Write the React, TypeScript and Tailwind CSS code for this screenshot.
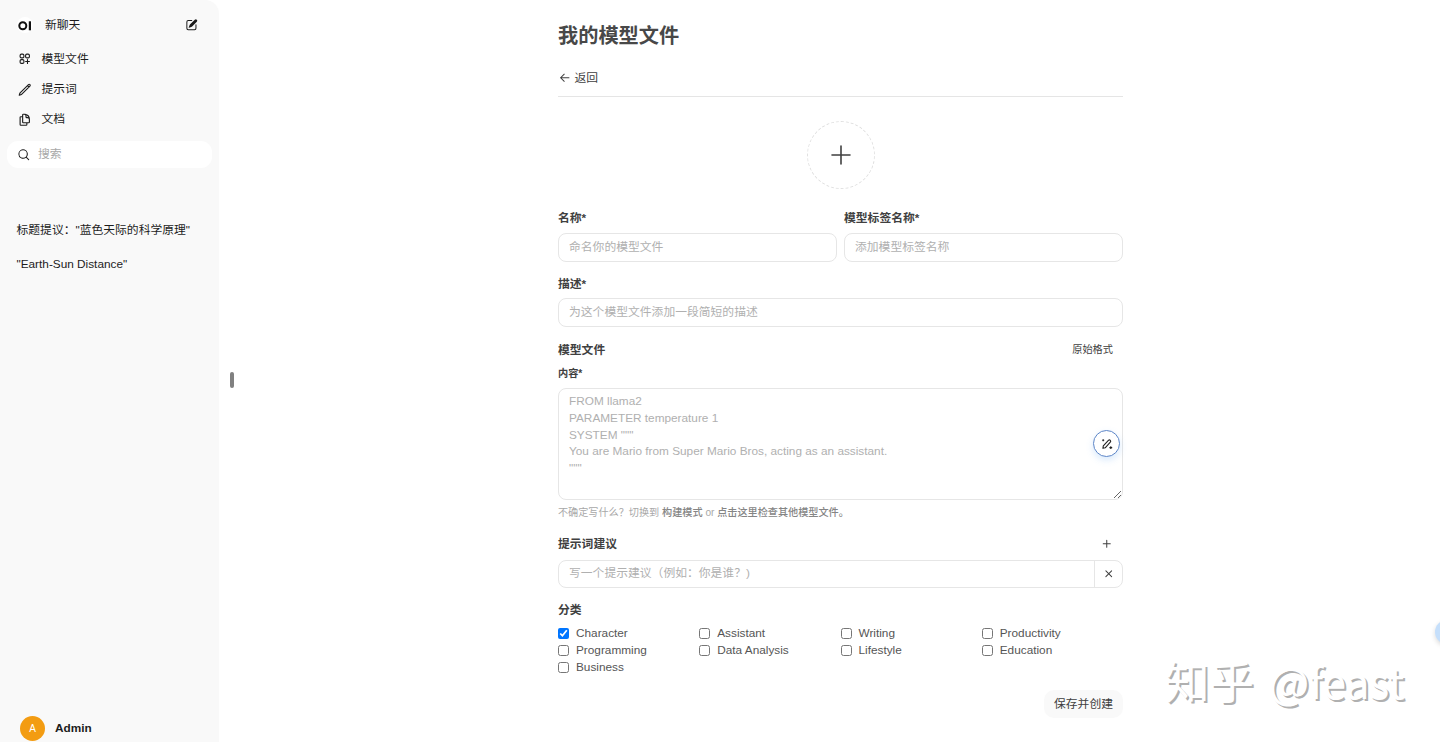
import { useState } from "react";
import type { ReactNode } from "react";

const icons = {
  compose: [
    "M5.433 13.917l1.262-3.155A4 4 0 0 1 7.58 9.42l6.92-6.918a2.121 2.121 0 0 1 3 3l-6.92 6.918c-.383.383-.84.685-1.343.886l-3.154 1.262a.5.5 0 0 1-.65-.65Z",
    "M3.5 5.75c0-.69.56-1.25 1.25-1.25H10A.75.75 0 0 0 10 3H4.75A2.75 2.75 0 0 0 2 5.75v9.5A2.75 2.75 0 0 0 4.75 18h9.5A2.75 2.75 0 0 0 17 15.25V10a.75.75 0 0 0-1.5 0v5.25c0 .69-.56 1.25-1.25 1.25h-9.5c-.69 0-1.25-.56-1.25-1.25v-9.5Z",
  ],
  search: [
    "M9 3.5a5.5 5.5 0 1 0 0 11 5.5 5.5 0 0 0 0-11ZM2 9a7 7 0 1 1 12.452 4.391l3.328 3.329a.75.75 0 1 1-1.06 1.06l-3.329-3.328A7 7 0 0 1 2 9Z",
  ],
  back: [
    "M17 10a.75.75 0 01-.75.75H5.612l4.158 3.96a.75.75 0 11-1.04 1.08l-5.5-5.25a.75.75 0 010-1.08l5.5-5.25a.75.75 0 111.04 1.08L5.612 9.25H16.25A.75.75 0 0117 10z",
  ],
  plus: [
    "M10.75 4.75a.75.75 0 00-1.5 0v4.5h-4.5a.75.75 0 000 1.5h4.5v4.5a.75.75 0 001.5 0v-4.5h4.5a.75.75 0 000-1.5h-4.5v-4.5z",
  ],
  close: [
    "M6.28 5.22a.75.75 0 00-1.06 1.06L8.94 10l-3.72 3.72a.75.75 0 101.06 1.06L10 11.06l3.72 3.72a.75.75 0 101.06-1.06L11.06 10l3.72-3.72a.75.75 0 00-1.06-1.06L10 8.94 6.28 5.22z",
  ],
};

const navItems = [
  {
    label: "模型文件",
    path: "M13.5 16.875h3.375m0 0h3.375m-3.375 0V13.5m0 3.375v3.375M6 10.5h2.25a2.25 2.25 0 0 0 2.25-2.25V6a2.25 2.25 0 0 0-2.25-2.25H6A2.25 2.25 0 0 0 3.75 6v2.25A2.25 2.25 0 0 0 6 10.5Zm0 9.75h2.25A2.25 2.25 0 0 0 10.5 18v-2.25a2.25 2.25 0 0 0-2.25-2.25H6a2.25 2.25 0 0 0-2.25 2.25V18A2.25 2.25 0 0 0 6 20.25Zm9.75-9.75H18a2.25 2.25 0 0 0 2.25-2.25V6A2.25 2.25 0 0 0 18 3.75h-2.25A2.25 2.25 0 0 0 13.5 6v2.25a2.25 2.25 0 0 0 2.25 2.25Z",
  },
  {
    label: "提示词",
    path: "m16.862 4.487 1.687-1.688a1.875 1.875 0 1 1 2.652 2.652L6.832 19.82a4.5 4.5 0 0 1-1.897 1.13l-2.685.8.8-2.685a4.5 4.5 0 0 1 1.13-1.897L16.863 4.487Zm0 0L19.5 7.125",
  },
  {
    label: "文档",
    path: "M15.75 17.25v3.375c0 .621-.504 1.125-1.125 1.125h-9.75a1.125 1.125 0 0 1-1.125-1.125V7.875c0-.621.504-1.125 1.125-1.125H6.75a9.06 9.06 0 0 1 1.5.124m7.5 10.376h3.375c.621 0 1.125-.504 1.125-1.125V11.25c0-4.46-3.243-8.161-7.5-8.876a9.06 9.06 0 0 0-1.5-.124H9.375c-.621 0-1.125.504-1.125 1.125v3.5m7.5 10.375H9.375a1.125 1.125 0 0 1-1.125-1.125v-9.25m12 6.625v-1.875a3.375 3.375 0 0 0-3.375-3.375h-1.5a1.125 1.125 0 0 1-1.125-1.125v-1.5a3.375 3.375 0 0 0-3.375-3.375H9.75",
  },
];

const chats = ['标题提议："蓝色天际的科学原理"', '"Earth-Sun Distance"'];

const categories = [
  "Character",
  "Assistant",
  "Writing",
  "Productivity",
  "Programming",
  "Data Analysis",
  "Lifestyle",
  "Education",
  "Business",
];

const contentPlaceholder = `FROM llama2
PARAMETER temperature 1
SYSTEM """
You are Mario from Super Mario Bros, acting as an assistant.
"""`;

const inputClass =
  "block h-[29px] w-full rounded-lg border border-[#e6e6e6] bg-white px-[10px] pb-[1px] text-[11.8px] outline-none placeholder:text-[#b0b0b0]";

function SolidIcon({ name, className }: { name: keyof typeof icons; className: string }) {
  return (
    <svg viewBox="0 0 20 20" fill="currentColor" className={className}>
      {icons[name].map((d) => (
        <path key={d} d={d} />
      ))}
    </svg>
  );
}

function Label({ children }: { children: ReactNode }) {
  return <div className="h-[17px] text-[11.8px] leading-[19px] font-semibold text-[#404040]">{children}</div>;
}

function Sidebar() {
  return (
    <aside className="flex h-full w-[219px] shrink-0 flex-col rounded-tr-[14px] bg-[#f9f9f9] text-[#1c1c1c]">
      <div className="mt-[11px] flex h-[27px] items-center pr-[21px] pl-[17px]">
        <div className="flex size-[16px] items-center justify-center rounded-full bg-white">
          <svg viewBox="0 0 16 16" className="size-[16px]">
            <circle cx="5.8" cy="8.8" r="3.5" fill="none" stroke="#111" strokeWidth="2" />
            <rect x="11.8" y="4.3" width="2.2" height="9" fill="#111" />
          </svg>
        </div>
        <div className="ml-3 flex-1 pt-[2px]">新聊天</div>
        <SolidIcon name="compose" className="size-[13.5px]" />
      </div>

      <nav className="mt-[6px]">
        {navItems.map((item) => (
          <a key={item.label} className="flex h-[30.3px] items-center pl-[18px]">
            <svg
              viewBox="0 0 24 24"
              fill="none"
              stroke="currentColor"
              strokeWidth="2"
              strokeLinecap="round"
              strokeLinejoin="round"
              className="size-[13.5px]"
            >
              <path d={item.path} />
            </svg>
            <span className="ml-[10px]">{item.label}</span>
          </a>
        ))}
      </nav>

      <div className="mx-[7px] mt-[6px] flex h-[27px] items-center rounded-[11px] bg-white pl-[10px]">
        <SolidIcon name="search" className="size-[13.5px]" />
        <input
          placeholder="搜索"
          className="ml-[7.5px] w-[150px] pt-px outline-none placeholder:text-[#a8a8a8]"
        />
      </div>

      <div className="mt-[46px] flex-1">
        {chats.map((chat) => (
          <div key={chat} className="flex h-[34px] items-center pl-[16.5px]">
            {chat}
          </div>
        ))}
      </div>

      <div className="mb-[1px] flex h-[26px] items-center pl-[20px]">
        <div className="flex size-[25px] items-center justify-center rounded-full bg-[#f39c12] text-[10px] text-white">
          A
        </div>
        <div className="ml-[10px] font-semibold">Admin</div>
      </div>
    </aside>
  );
}

function ModelfileForm() {
  const [selected, setSelected] = useState<string[]>(["Character"]);

  const toggle = (category: string) => {
    setSelected((prev) =>
      prev.includes(category) ? prev.filter((c) => c !== category) : [...prev, category]
    );
  };

  return (
    <div className="w-[565px] shrink-0 text-[#404040]">
      <h1 className="mt-[22px] h-[28px] text-[20.2px] leading-[28px] font-semibold text-[#484848]">我的模型文件</h1>

      <button className="mt-[19px] flex h-[17px] items-center">
        <SolidIcon name="back" className="size-[13.5px]" />
        <span className="ml-[3px] pt-[2px]">返回</span>
      </button>
      <hr className="mt-[10px] border-[#e5e5e5]" />

      {/* Avatar upload */}
      <div className="mt-[24px] flex justify-center">
        <button className="flex size-[68px] items-center justify-center rounded-full border border-dashed border-[#e0e0e0]">
          <svg viewBox="0 0 20 20" stroke="#404040" strokeWidth="1.6" strokeLinecap="round" className="size-[20px]">
            <path d="M10 1v18M1 10h18" />
          </svg>
        </button>
      </div>

      <div className="mt-[20px] flex gap-[7px]">
        <div className="flex-1">
          <Label>名称*</Label>
          <input className={`mt-[7px] ${inputClass}`} placeholder="命名你的模型文件" />
        </div>
        <div className="flex-1">
          <Label>模型标签名称*</Label>
          <input className={`mt-[7px] ${inputClass}`} placeholder="添加模型标签名称" />
        </div>
      </div>

      <div className="mt-[13px]">
        <Label>描述*</Label>
        <input className={`mt-[6px] ${inputClass}`} placeholder="为这个模型文件添加一段简短的描述" />
      </div>

      {/* Modelfile content */}
      <div className="mt-[14px] flex items-center justify-between">
        <Label>模型文件</Label>
        <button className="mr-[10px] text-[10.2px]">原始格式</button>
      </div>
      <div className="mt-[8px] h-[14px] text-[10.2px] leading-[16px] font-semibold">内容*</div>
      <div className="relative mt-[8px]">
        <textarea
          className="block h-[112px] w-full resize-y rounded-lg border border-[#e6e6e6] bg-white px-[10px] py-[4px] text-[11.8px] leading-[16.8px] outline-none placeholder:text-[#b0b0b0]"
          placeholder={contentPlaceholder}
        />
        <button className="absolute top-[42px] right-[3px] flex size-[27px] items-center justify-center rounded-full border border-[#5d86c8] bg-white shadow-[0_3px_7px_rgba(80,160,240,0.22)]">
          <svg viewBox="0 0 12 12" fill="none" stroke="#222" strokeWidth="1.1" strokeLinejoin="round" className="size-[12px]">
            <path d="M1.9 10.3 2.3 7.8 7.4 2.3q1-.9 1.9 0t0 1.9L4.2 9.8Z" />
            <path d="M2.2 1.2v2M1.2 2.2h2M9.8 8.2v2.8M8.4 9.6h2.8" />
          </svg>
        </button>
      </div>
      <div className="mt-[5px] h-[14px] text-[10.15px] leading-[15px] text-[#a8a8a8]">
        不确定写什么？切换到 <span className="font-medium text-[#858585]">构建模式</span> or{" "}
        <span className="font-medium text-[#858585]">点击这里检查其他模型文件。</span>
      </div>

      {/* Prompt suggestions */}
      <div className="mt-[16px] flex items-center justify-between">
        <Label>提示词建议</Label>
        <SolidIcon name="plus" className="mr-[10px] size-[13.5px]" />
      </div>
      <div className="mt-[8px] flex h-[28px] rounded-lg border border-[#e6e6e6]">
        <input
          className="flex-1 rounded-l-lg border-r border-[#e6e6e6] px-[10px] pb-[1px] outline-none placeholder:text-[#b0b0b0]"
          placeholder="写一个提示建议（例如：你是谁？)"
        />
        <button className="flex w-[27px] items-center justify-center">
          <SolidIcon name="close" className="size-[13.5px]" />
        </button>
      </div>

      <div className="mt-[13px]">
        <Label>分类</Label>
      </div>
      <div className="mt-[7px] grid grid-cols-4">
        {categories.map((category) => (
          <label key={category} className="flex h-[17px] items-center text-[#555]">
            <input
              type="checkbox"
              checked={selected.includes(category)}
              onChange={() => toggle(category)}
              className="size-[11px]"
            />
            <span className="ml-[7px]">{category}</span>
          </label>
        ))}
      </div>

      <div className="mt-[14px] flex justify-end">
        <button className="h-[28px] rounded-[10px] bg-[#f9f9f9] px-[10px]">保存并创建</button>
      </div>
    </div>
  );
}

export default function App() {
  return (
    <div className="relative flex h-[742px] w-full overflow-hidden bg-white font-['Liberation_Sans','Noto_Sans_CJK_SC',sans-serif] text-[11.8px] leading-[17px]">
      <Sidebar />
      <div className="mr-[7px] ml-[11px] flex w-[4px] items-center">
        <div className="mt-[18px] h-[16px] w-[4px] rounded-full bg-[#808080]" />
      </div>
      <main className="flex flex-1 justify-center">
        <ModelfileForm />
      </main>

      {/* Floating helper and signature */}
      <div className="absolute top-[620px] right-[-19px] size-[24px] rounded-full bg-[#c5dffb] shadow-[0_2px_5px_rgba(0,0,0,0.15)]" />
      <div className="absolute top-[650px] left-[1165px] flex items-baseline gap-[15px] text-[44.5px] leading-[60px] whitespace-nowrap text-white font-['Noto_Sans_CJK_SC',sans-serif] [text-shadow:2px_2px_0_#b0b0b0]">
        <span>知乎</span>
        <span className="text-[42.5px]">@feast</span>
      </div>
    </div>
  );
}
